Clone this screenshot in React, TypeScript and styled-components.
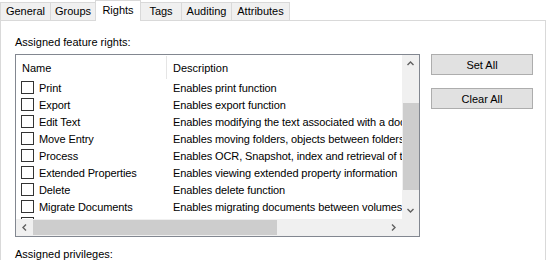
import React from "react";
import styled, { createGlobalStyle } from "styled-components";

const GlobalStyle = createGlobalStyle`
  html, body { margin: 0; padding: 0; background: #fff; }
  body {
    font-family: "Liberation Sans", Arial, sans-serif;
    font-size: 11px;
    color: #000;
  }
  * { box-sizing: border-box; }
`;

const Window = styled.div`
  width: 546px;
  height: 260px;
  overflow: hidden;
  background: #fff;
  display: flex;
  flex-direction: column;
`;

const TabStrip = styled.div`
  display: flex;
  align-items: flex-end;
  height: 20px;
  position: relative;
  z-index: 2;
`;

const Tab = styled.div<{ $w: number; $active?: boolean }>`
  width: ${(p) => p.$w}px;
  height: ${(p) => (p.$active ? 21 : 18)}px;
  margin-left: -1px;
  margin-bottom: ${(p) => (p.$active ? -1 : 0)}px;
  border: 1px solid #d9d9d9;
  border-bottom: none;
  background: ${(p) => (p.$active ? "#ffffff" : "#f0f0f0")};
  display: flex;
  align-items: center;
  justify-content: center;
  padding-bottom: ${(p) => (p.$active ? 1 : 0)}px;
  line-height: 1;
  &:first-child { margin-left: 0; }
`;

const Panel = styled.div`
  flex: 1;
  border-top: 1px solid #d9d9d9;
  border-left: 1px solid #d9d9d9;
  border-right: 1px solid #d9d9d9;
  display: flex;
  padding: 14px 0 0 14px;
  position: relative;
  z-index: 1;
`;

const LeftColumn = styled.div`
  width: 405px;
  display: flex;
  flex-direction: column;
`;

const Label = styled.div<{ $gap?: number }>`
  line-height: 15px;
  height: 15px;
  margin-top: ${(p) => p.$gap ?? 0}px;
  white-space: nowrap;
`;

const ListBox = styled.div`
  margin-top: 4px;
  width: 405px;
  height: 183px;
  border: 1px solid #828790;
  display: grid;
  grid-template-columns: 1fr 17px;
  grid-template-rows: 1fr 17px;
  background: #fff;
`;

const Viewport = styled.div`
  overflow: hidden;
  display: flex;
  flex-direction: column;
`;

const HeaderRow = styled.div`
  display: flex;
  height: 24px;
  flex-shrink: 0;
  align-items: center;
`;

const HeaderCell = styled.div<{ $w?: number; $divider?: boolean }>`
  ${(p) => (p.$w ? `width: ${p.$w}px;` : "flex: 1;")}
  flex-shrink: 0;
  height: 23px;
  margin-top: 1px;
  display: flex;
  align-items: center;
  padding-left: 6px;
  border-right: ${(p) => (p.$divider ? "1px solid #e5e5e5" : "none")};
  white-space: nowrap;
`;

const Row = styled.div`
  display: flex;
  height: 17px;
  flex-shrink: 0;
  align-items: center;
  letter-spacing: -0.1px;
`;

const NameCell = styled.div`
  width: 151px;
  flex-shrink: 0;
  display: flex;
  align-items: center;
  gap: 5px;
  padding-left: 5px;
  white-space: nowrap;
`;

const CheckBox = styled.span`
  width: 13px;
  height: 13px;
  border: 1px solid #333333;
  background: #fff;
  flex-shrink: 0;
`;

const DescCell = styled.div`
  padding-left: 6px;
  white-space: nowrap;
`;

const VScroll = styled.div`
  background: #f0f0f0;
  display: flex;
  flex-direction: column;
`;

const HScroll = styled.div`
  background: #f0f0f0;
  display: flex;
  flex-direction: row;
`;

const Corner = styled.div`
  background: #f0f0f0;
`;

const ArrowButton = styled.div`
  width: 17px;
  height: 17px;
  flex-shrink: 0;
  display: flex;
  align-items: center;
  justify-content: center;
  color: #606060;
`;

const Track = styled.div<{ $vertical?: boolean }>`
  flex: 1;
  display: flex;
  flex-direction: ${(p) => (p.$vertical ? "column" : "row")};
`;

const Thumb = styled.div<{ $vertical?: boolean; $offset: number; $size: number }>`
  background: #cdcdcd;
  flex-shrink: 0;
  ${(p) =>
    p.$vertical
      ? `height: ${p.$size}px; margin-top: ${p.$offset}px; margin-left: 1px; width: 16px;`
      : `width: ${p.$size}px; margin-left: ${p.$offset}px; margin-top: 1px; height: 15px;`}
`;

const RightColumn = styled.div`
  margin-left: 11px;
  padding-top: 19px;
  display: flex;
  flex-direction: column;
  gap: 13px;
`;

const Button = styled.button`
  width: 102px;
  height: 21px;
  background: #e1e1e1;
  border: 1px solid #adadad;
  font-family: inherit;
  font-size: 11px;
  color: #000;
  padding: 0;
  margin: 0;
  display: flex;
  align-items: center;
  justify-content: center;
`;

type Dir = "up" | "down" | "left" | "right";

const Chevron: React.FC<{ dir: Dir }> = ({ dir }) => {
  const rot = { up: 0, down: 180, left: -90, right: 90 }[dir];
  return (
    <svg width="9" height="9" viewBox="0 0 9 9" style={{ transform: `rotate(${rot}deg)` }}>
      <path d="M1.5 6 L4.5 3 L7.5 6" fill="none" stroke="currentColor" strokeWidth="1.4" />
    </svg>
  );
};

const rights: [string, string][] = [
  ["Print", "Enables print function"],
  ["Export", "Enables export function"],
  ["Edit Text", "Enables modifying the text associated with a document"],
  ["Move Entry", "Enables moving folders, objects between folders"],
  ["Process", "Enables OCR, Snapshot, index and retrieval of text"],
  ["Extended Properties", "Enables viewing extended property information"],
  ["Delete", "Enables delete function"],
  ["Migrate Documents", "Enables migrating documents between volumes"],
  ["Manage Versions", "Enables managing document versions"],
];

const tabs: { label: string; w: number; active?: boolean }[] = [
  { label: "General", w: 51 },
  { label: "Groups", w: 46 },
  { label: "Rights", w: 46, active: true },
  { label: "Tags", w: 42 },
  { label: "Auditing", w: 51 },
  { label: "Attributes", w: 59 },
];

export default function App() {
  return (
    <Window>
      <GlobalStyle />
      <TabStrip>
        {tabs.map((t) => (
          <Tab key={t.label} $w={t.w} $active={t.active}>
            {t.label}
          </Tab>
        ))}
      </TabStrip>
      <Panel>
        <LeftColumn>
          <Label>Assigned feature rights:</Label>
          <ListBox>
            <Viewport>
              <HeaderRow>
                <HeaderCell $w={151} $divider>
                  Name
                </HeaderCell>
                <HeaderCell>Description</HeaderCell>
              </HeaderRow>
              {rights.map(([name, desc]) => (
                <Row key={name}>
                  <NameCell>
                    <CheckBox />
                    {name}
                  </NameCell>
                  <DescCell>{desc}</DescCell>
                </Row>
              ))}
            </Viewport>
            <VScroll>
              <ArrowButton>
                <Chevron dir="up" />
              </ArrowButton>
              <Track $vertical>
                <Thumb $vertical $offset={31} $size={87} />
              </Track>
              <ArrowButton>
                <Chevron dir="down" />
              </ArrowButton>
            </VScroll>
            <HScroll>
              <ArrowButton>
                <Chevron dir="left" />
              </ArrowButton>
              <Track>
                <Thumb $offset={0} $size={244} />
              </Track>
              <ArrowButton>
                <Chevron dir="right" />
              </ArrowButton>
            </HScroll>
            <Corner />
          </ListBox>
          <Label $gap={10}>Assigned privileges:</Label>
        </LeftColumn>
        <RightColumn>
          <Button>Set All</Button>
          <Button>Clear All</Button>
        </RightColumn>
      </Panel>
    </Window>
  );
}
